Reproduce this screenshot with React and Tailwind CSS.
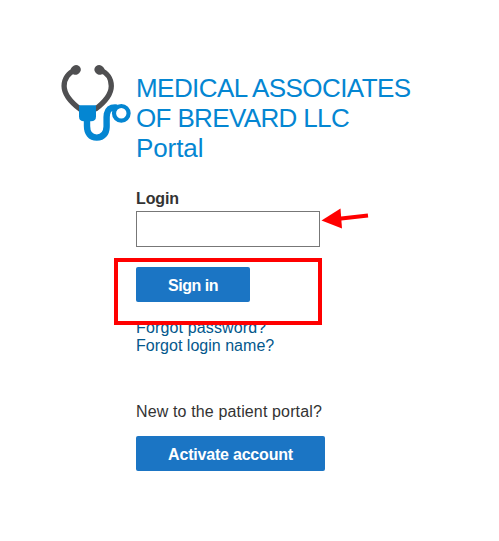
import React, { useState } from 'react';

const StethoscopeLogo = () => (
    <svg className="w-[71px] h-[78px] shrink-0" viewBox="60 64 71 78" fill="none">
        {/* Ear tubes */}
        <path d="M75 70.500C68.500 72.500 64.100 78.500 64.100 86C64.100 95 70.500 102 80.500 109.500" stroke="#4f4f51" strokeWidth="5.300" />
        <path d="M100.400 70.500C107 72.500 111.300 78.500 111.300 86C111.300 95 105 102 95 109.500" stroke="#4f4f51" strokeWidth="5.300" />
        <ellipse cx="75.700" cy="69.900" rx="5.200" ry="4.700" transform="rotate(-25 75.700 69.900)" fill="#4f4f51" />
        <ellipse cx="99.500" cy="69.900" rx="5.200" ry="4.700" transform="rotate(25 99.500 69.900)" fill="#4f4f51" />
        {/* Hose and chest piece */}
        <path d="M79 105.300H96V116.500Q96 121.300 91 121.300H84Q79 121.300 79 116.500Z" fill="#0486d2" />
        <path d="M87 120V126C87 133 90.500 137.600 96.800 137.600C103.500 137.600 106.300 133 106.600 127C106.800 123 106.200 118 106.900 114C108 108.800 111 107 117 107.600" stroke="#0486d2" strokeWidth="6.400" />
        <circle cx="121.300" cy="113.300" r="5.500" fill="#fff" />
        <circle cx="121.300" cy="113.300" r="7.300" stroke="#0486d2" strokeWidth="4.200" />
    </svg>
);

const LoginPage = () => {
    const [login, setLogin] = useState('');

    return (
        <div className="min-h-screen bg-white pt-16 pl-[60px] text-[16px] leading-[18px] text-[#333] font-['Liberation_Sans',Arial,sans-serif]">
            <div className="flex h-[99px] gap-[5px]">
                <StethoscopeLogo />
                <h1 className="pt-[9px] text-[26px] leading-[30px] whitespace-nowrap text-[#0486d2]">
                    <span className="block tracking-[-0.56px]">MEDICAL ASSOCIATES</span>
                    <span className="block tracking-[-0.64px]">OF BREVARD LLC</span>
                    <span className="block tracking-[-0.1px]">Portal</span>
                </h1>
            </div>

            <div className="ml-[76px] mt-[27px] flex flex-col items-start">
                <label htmlFor="login" className="font-bold tracking-[-0.1px]">Login</label>
                <input
                    id="login"
                    value={login}
                    onChange={(e) => setLogin(e.target.value)}
                    className="mt-[3px] w-[184px] h-9 border border-[#777] bg-white px-2 outline-none"
                />

                <div className="relative mt-5">
                    <button className="block w-[114px] h-[35px] pt-[2px] rounded-[2px] bg-[#1b75c4] font-bold tracking-[-0.5px] text-white">Sign in</button>
                    {/* Annotations over the form */}
                    <div className="absolute z-10 -left-[22px] -top-[9px] w-[208px] h-[67px] border-4 border-[#f00]" />
                    <svg className="absolute left-[184px] -top-[60px] w-[50px] h-[24px]" viewBox="320 207 50 24">
                        <path d="M321.500 220.500L340.500 208.500L342 228.500Z" fill="#ff0000" />
                        <path d="M339 218.700L368 215.500" stroke="#ff0000" strokeWidth="4" />
                    </svg>
                </div>

                <a href="#" className="mt-[17px] tracking-[0.14px] text-[#04588c]">Forgot password?</a>
                <a href="#" className="tracking-[0.02px] text-[#04588c]">Forgot login name?</a>

                <p className="mt-12 tracking-[0.14px]">New to the patient portal?</p>
                <button className="mt-[15px] w-[189px] h-[35px] pt-[2px] rounded-[2px] bg-[#1b75c4] font-bold tracking-[-0.2px] text-white">Activate account</button>
            </div>
        </div>
    );
};

export default LoginPage;
